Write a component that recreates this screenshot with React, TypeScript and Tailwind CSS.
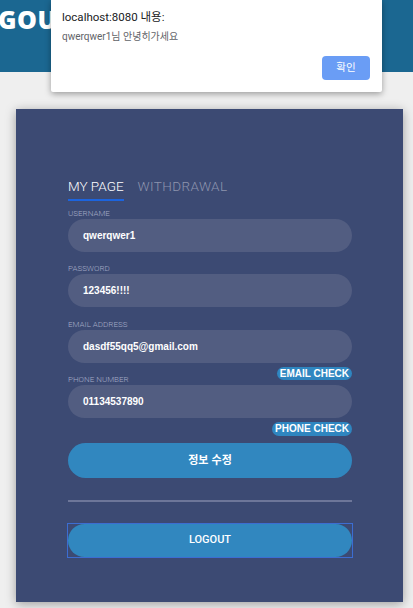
import React from "react";

const ff = { fontFamily: '"Liberation Sans", "Noto Sans CJK KR", sans-serif' };

function Field({ label, value }: { label: string; value: string }) {
  return (
    <div className="flex flex-col">
      <div className="h-[11px] text-[8px] leading-[11px] font-light uppercase text-[#a4abc6] font-['Roboto',sans-serif]">
        {label}
      </div>
      <div className="h-[33px] rounded-full bg-[#525d81] flex items-center pl-[15px] text-[10px] font-bold text-white font-['Liberation_Sans',sans-serif]">
        {value}
      </div>
    </div>
  );
}

export default function App() {
  return (
    <div className="relative w-[413px] h-[608px] overflow-hidden bg-[#efefef]" style={ff}>
      <div className="h-[72px] bg-[#1b6791] overflow-hidden">
        <div className="ml-[-2px] mt-[7px] text-[25px] leading-none font-extrabold text-white font-['Open_Sans',sans-serif] tracking-[0.5px]">
          GOUT
        </div>
      </div>

      <div className="ml-[16px] mt-[37px] w-[387px] h-[493px] bg-[#3c4a73] shadow-[0_2px_10px_rgba(0,0,0,0.35)] pl-[52px] pr-[51px] pt-[68px] flex flex-col">
        <div className="flex gap-[14px] font-['Roboto',sans-serif] font-light text-[13.5px] leading-[18px]">
          <div className="text-white pb-[4px] border-b-2 border-[#1c64de]">MY PAGE</div>
          <div className="text-[#8d94ae] tracking-[0.4px]">WITHDRAWAL</div>
        </div>

        <div className="mt-[7px]">
          <Field label="Username" value="qwerqwer1" />
        </div>
        <div className="mt-[11px]">
          <Field label="Password" value="123456!!!!" />
        </div>
        <div className="mt-[12px]">
          <Field label="Email Address" value="dasdf55qq5@gmail.com" />
        </div>
        <div className="mt-[4px] self-end h-[13px] rounded-full bg-[#2f86c0] px-[3px] text-[10px] leading-[13px] font-bold text-white">
          EMAIL CHECK
        </div>
        <div className="mt-[-6px]">
          <Field label="Phone Number" value="01134537890" />
        </div>
        <div className="mt-[4px] self-end h-[14px] rounded-full bg-[#2f86c0] px-[3px] text-[10px] leading-[14px] font-bold text-white">
          PHONE CHECK
        </div>

        <div className="mt-[7px] h-[35px] rounded-full bg-[#3187bf] flex items-center justify-center text-[11px] font-bold text-white">
          정보 수정
        </div>

        <div className="mt-[22px] h-[2px] bg-[#6d7699]" />

        <div className="mt-[22px] outline outline-1 outline-[#3c6dd2]">
          <div className="h-[33px] rounded-full bg-[#3187bf] flex items-center justify-center text-[11px] font-medium text-white font-['Roboto',sans-serif]">
            LOGOUT
          </div>
        </div>
      </div>

      <div className="absolute left-[51px] top-0 w-[331px] h-[92px] bg-white shadow-[0_2px_6px_rgba(0,0,0,0.35)] rounded-b-[2px] flex flex-col pl-[11px] pr-[12px] pt-[8px] font-['Roboto','Noto_Sans_CJK_KR',sans-serif]">
        <div className="text-[11.5px] leading-[18px] text-[#202124]">localhost:8080 내용:</div>
        <div className="mt-[3px] text-[10px] leading-[16px] text-[#5f6368]">qwerqwer1님 안녕히가세요</div>
        <div className="mt-[11px] flex justify-end">
          <div className="w-[48px] h-[24px] rounded-[4px] bg-[#6a9df5] flex items-center justify-center text-[10.5px] text-white">
            확인
          </div>
        </div>
      </div>
    </div>
  );
}
